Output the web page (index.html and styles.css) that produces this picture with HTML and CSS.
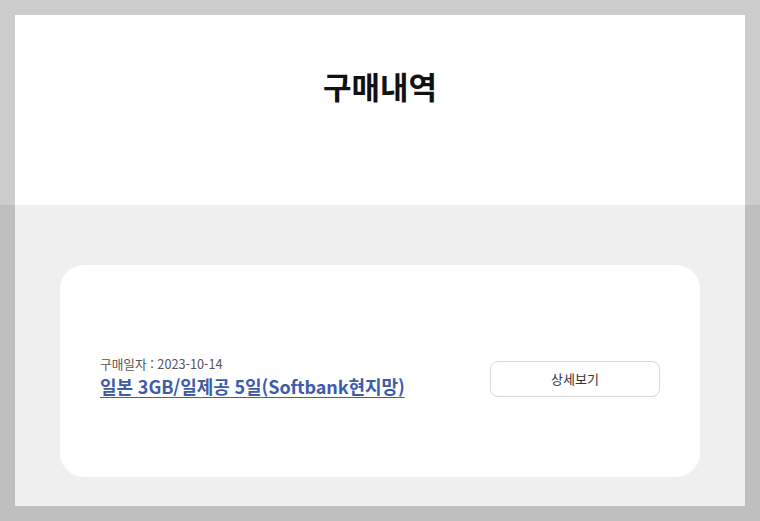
FILE: index.html
```html
<!DOCTYPE html>
<html lang="ko">
<head>
<meta charset="utf-8">
<link rel="stylesheet" href="styles.css">
</head>
<body>
<div class="frame">
  <header class="head">
    <h1 class="title">구매내역</h1>
  </header>
  <section class="list">
    <div class="card">
      <div class="info">
        <p class="date">구매일자 : 2023-10-14</p>
        <a class="name" href="#">일본 3GB/일제공 5일(Softbank현지망)</a>
      </div>
      <button class="detail" type="button">상세보기</button>
    </div>
  </section>
</div>
</body>
</html>
```

FILE: styles.css
```css
html, body {
  margin: 0;
  padding: 0;
}
body {
  width: 760px;
  height: 521px;
  background: linear-gradient(#cccccc 0 205px, #bfbfbf 205px 100%);
  font-family: "Noto Sans CJK KR", "Noto Sans", sans-serif;
  box-sizing: border-box;
  padding: 15px;
}
.frame {
  height: 491px;
  display: flex;
  flex-direction: column;
}
.head {
  height: 190px;
  background: #ffffff;
  display: flex;
  justify-content: center;
  padding-top: 49px;
  box-sizing: border-box;
}
.title {
  margin: 0;
  font-size: 31px;
  font-weight: 700;
  color: #111;
  line-height: 44px;
  height: 44px;
}
.list {
  flex: 1;
  background: #efefef;
  padding: 60px 45px 29px;
}
.card {
  height: 212px;
  background: #fff;
  border-radius: 24px;
  box-sizing: border-box;
  padding: 15px 40px 0;
  display: flex;
  align-items: center;
  justify-content: space-between;
}
.info {
  display: flex;
  flex-direction: column;
  margin-top: -3px;
}
.date {
  margin: 0;
  font-size: 12.7px;
  line-height: 18px;
  color: #555;
}
.name {
  font-size: 18px;
  line-height: 26px;
  font-weight: 600;
  letter-spacing: -0.1px;
  color: #3f5ca8;
  text-decoration: underline;
  text-underline-offset: 3px;
}
.detail {
  width: 170px;
  height: 36px;
  border: 1px solid #d9d9d9;
  border-radius: 8px;
  background: #fff;
  font-family: inherit;
  font-size: 13px;
  color: #333;
  padding: 0;
}
```
